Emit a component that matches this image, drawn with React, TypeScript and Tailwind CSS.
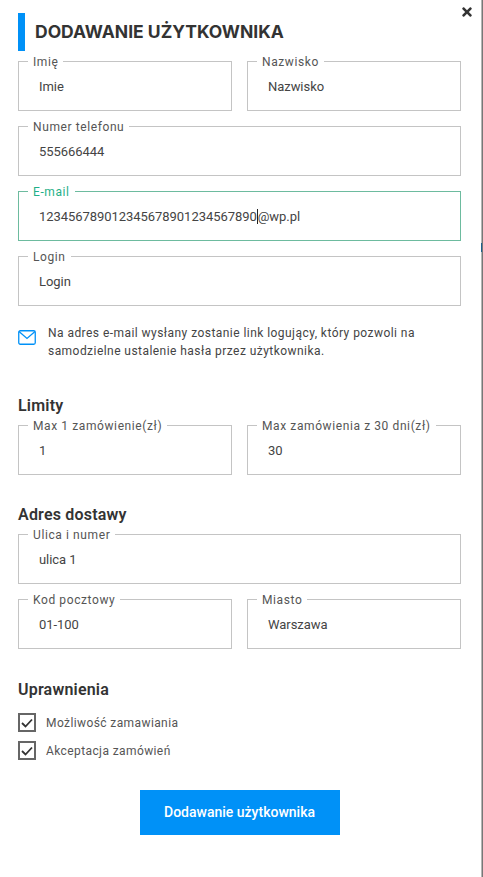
import { FaTimes } from "react-icons/fa";

type FieldProps = {
  label: string;
  value: string;
  active?: boolean;
};

function Field({ label, value, active }: FieldProps) {
  const at = value.indexOf("@");
  return (
    <div
      className={`relative flex h-[50px] items-center border px-[20px] pt-[2px] text-[13px] tracking-[-0.05px] text-[#444] ${
        active ? "border-[#6dbb9f]" : "border-[#c4c4c4]"
      }`}
    >
      <span
        className={`absolute left-[9px] top-[-8px] bg-white px-[5px] text-[12px] leading-[16px] tracking-[0.6px] ${
          active ? "text-[#1fb088]" : "text-[#555]"
        }`}
      >
        {label}
      </span>
      {active ? (
        <span>
          {value.slice(0, at)}
          <span className="border-l border-[#222]">{value.slice(at)}</span>
        </span>
      ) : (
        value
      )}
    </div>
  );
}

function SectionTitle({ children }: { children: string }) {
  return <h3 className="pt-[1px] text-[16px] font-semibold leading-[19px] tracking-[0.2px] text-[#333]">{children}</h3>;
}

function Check({ label }: { label: string }) {
  return (
    <label className="flex h-[19px] items-center gap-[10px] text-[12px] leading-[16px] tracking-[0.4px] text-[#555]">
      <span className="flex h-[19px] w-[18px] shrink-0 items-center justify-center border-2 border-[#666]">
        <svg width="12" height="10" viewBox="0 0 12 10" fill="none">
          <path d="M1 5l3.5 3.5L11 1.5" stroke="#333" strokeWidth="1.8" />
        </svg>
      </span>
      <span>{label}</span>
    </label>
  );
}

export default function App() {
  return (
    <div className="relative h-[877px] w-[483px] overflow-hidden border-r border-[#777] bg-white font-['Roboto',sans-serif]">
      <div className="h-full border-r border-[#b5b5b5] pl-[18px] pr-[20px] pt-[13px]">
        <FaTimes className="absolute right-[8px] top-[5px] text-[#333]" size={14} />
        <div className="absolute right-0 top-[243px] h-[9px] w-px bg-[#1d5f8f]" />

        <div className="flex h-[38px] items-center border-l-[7px] border-[#0091f7] pl-[10px]">
          <h2 className="font-['Inter',sans-serif] text-[17.5px] font-bold leading-[24px] text-[#333]">
            DODAWANIE UŻYTKOWNIKA
          </h2>
        </div>

        <div className="mt-[10px] flex flex-col gap-[15px]">
          <div className="grid grid-cols-2 gap-[15px]">
            <Field label="Imię" value="Imie" />
            <Field label="Nazwisko" value="Nazwisko" />
          </div>
          <Field label="Numer telefonu" value="555666444" />
          <Field label="E-mail" value="123456789012345678901234567890@wp.pl" active />
          <Field label="Login" value="Login" />
        </div>

        <div className="mt-[18px] flex items-start gap-[12px]">
          <svg className="mt-[6px] shrink-0" width="18" height="15" viewBox="0 0 18 15" fill="none">
            <rect x="0.75" y="0.75" width="16.5" height="13.5" rx="1.5" stroke="#0091f7" strokeWidth="1.3" />
            <path d="M1 1.5l8 7 8-7" stroke="#0091f7" strokeWidth="1.3" />
          </svg>
          <p className="text-[12px] leading-[18px] tracking-[0.45px] text-[#444]">
            Na adres e-mail wysłany zostanie link logujący, który pozwoli na samodzielne ustalenie hasła przez użytkownika.
          </p>
        </div>

        <div className="mt-[35px]">
          <SectionTitle>Limity</SectionTitle>
        </div>
        <div className="mt-[10px] grid grid-cols-2 gap-[15px]">
          <Field label="Max 1 zamówienie(zł)" value="1" />
          <Field label="Max zamówienia z 30 dni(zł)" value="30" />
        </div>

        <div className="mt-[29px]">
          <SectionTitle>Adres dostawy</SectionTitle>
        </div>
        <div className="mt-[10px] flex flex-col gap-[15px]">
          <Field label="Ulica i numer" value="ulica 1" />
          <div className="grid grid-cols-2 gap-[15px]">
            <Field label="Kod pocztowy" value="01-100" />
            <Field label="Miasto" value="Warszawa" />
          </div>
        </div>

        <div className="mt-[30px]">
          <SectionTitle>Uprawnienia</SectionTitle>
        </div>
        <div className="mt-[14px] flex flex-col gap-[9px]">
          <Check label="Możliwość zamawiania" />
          <Check label="Akceptacja zamówień" />
        </div>

        <div className="mt-[30px] flex justify-center">
          <button
            type="button"
            className="h-[45px] w-[200px] bg-[#0091f7] text-[14px] font-medium text-white"
          >
            Dodawanie użytkownika
          </button>
        </div>
      </div>
    </div>
  );
}
